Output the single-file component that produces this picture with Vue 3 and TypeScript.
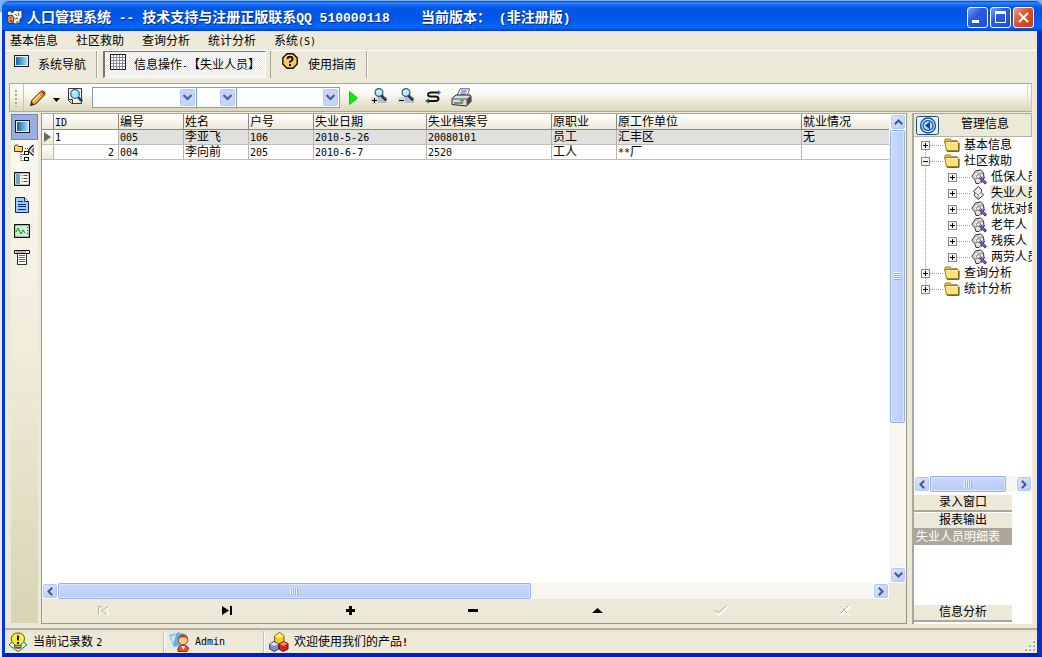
<script setup lang="ts">
import { ref } from 'vue'

interface TreeNode {
  label: string
  open: boolean
  children: string[]
}

const menus = ['基本信息', '社区救助', '查询分析', '统计分析']

const titleParts = [
  { text: '人口管理系统', latin: false },
  { text: ' -- ', latin: true },
  { text: '技术支持与注册正版联系', latin: false },
  { text: 'QQ 510000118    ', latin: true },
  { text: '当前版本：', latin: false },
  { text: ' (', latin: true },
  { text: '非注册版', latin: false },
  { text: ')', latin: true },
]

const columns = ['ID', '编号', '姓名', '户号', '失业日期', '失业档案号', '原职业', '原工作单位', '就业情况']
const rows = [
  ['1', '005', '李亚飞', '106', '2010-5-26', '20080101', '员工', '汇丰区', '无'],
  ['2', '004', '李向前', '205', '2010-6-7', '2520', '工人', '**厂', ''],
]

const isLatin = (text: string) => /^[\x20-\x7e]+$/.test(text)

const tree = ref<TreeNode[]>([
  { label: '基本信息', open: false, children: [] },
  {
    label: '社区救助',
    open: true,
    children: ['低保人员', '失业人员', '优抚对象', '老年人', '残疾人', '两劳人员'],
  },
  { label: '查询分析', open: false, children: [] },
  { label: '统计分析', open: false, children: [] },
])
const activeNode = ref('失业人员')

const views = ['screen', 'tree', 'form', 'doc', 'chart', 'scroll']
const activeView = ref('screen')

const steps = ['first', 'last', 'add', 'remove', 'edit', 'post', 'cancel']
const disabledSteps = ['first', 'post', 'cancel']
</script>

<template>
  <div class="desktop">
    <div class="window">
      <header class="titlebar">
        <svg class="app-icon" width="18" height="18" viewBox="0 0 18 18">
          <path d="M2 3h3l1 2 3-3 4 1 3-1v8l-2 1v4l-4 1-5-1-3-4 1-3-2-2z" fill="#f2f2ee" stroke="#3a3a44" />
          <path d="M2 8l4-1 2 3-1 5-4 1-2-4z" fill="#d9905a" stroke="#5a2c14" />
          <path d="M9 6l2 2M12 5l1 3M9 11l3-1M10 14h3" stroke="#55555f" />
          <path d="M4 10h1M4 13h2" stroke="#2a1208" />
        </svg>
        <h1><span v-for="(part, i) in titleParts" :key="i" :class="{ mono: part.latin }">{{ part.text }}</span></h1>
        <div class="caption-buttons">
          <button type="button" aria-label="最小化">
            <svg width="19" height="19" viewBox="0 0 19 19"><rect x="4" y="12" width="7" height="3" fill="#fff" /></svg>
          </button>
          <button type="button" aria-label="最大化">
            <svg width="19" height="19" viewBox="0 0 19 19"><path d="M4 3h11v12H4zM5 6v8h9V6z" fill="#fff" fill-rule="evenodd" /></svg>
          </button>
          <button type="button" class="close" aria-label="关闭">
            <svg width="19" height="19" viewBox="0 0 19 19"><path d="M5 5l9 9M14 5l-9 9" stroke="#fff" stroke-width="2.2" /></svg>
          </button>
        </div>
      </header>

      <nav class="menubar">
        <button v-for="menu in menus" :key="menu" type="button">{{ menu }}</button>
        <button type="button">系统<span class="latin">(S)</span></button>
      </nav>

      <div class="tabs">
        <button type="button" class="tab">
          <svg width="16" height="16" viewBox="0 0 16 16">
            <defs>
              <linearGradient id="screenFill"><stop offset="0" stop-color="#1462a8" /><stop offset="1" stop-color="#a8dcf4" /></linearGradient>
            </defs>
            <rect x=".5" y="1.5" width="14" height="11" fill="#e8f0f4" stroke="#111c2c" />
            <rect x="2" y="3" width="11" height="8" fill="url(#screenFill)" />
          </svg>
          <span>系统导航</span>
        </button>
        <button type="button" class="tab pressed">
          <svg width="16" height="16" viewBox="0 0 16 16">
            <rect x=".5" y=".5" width="15" height="15" fill="#fff" stroke="#222" />
            <path d="M3.5 1v14M6.5 1v14M9.5 1v14M12.5 1v14M1 3.5h14M1 6.5h14M1 9.5h14M1 12.5h14" stroke="#8c8c8c" />
          </svg>
          <span>信息操作<span class="latin">-</span>【失业人员】</span>
        </button>
        <button type="button" class="tab help">
          <svg width="16" height="18" viewBox="0 0 16 18">
            <path d="M5 .7h6l4.2 4.2v6L11 15.2H5L.8 11V5z" fill="#fbc75c" stroke="#111" stroke-width="1.4" />
            <path d="M2.5 6L5.5 2.5H10" fill="none" stroke="#fff0b8" />
            <path d="M5.5 6q0-2.2 2.5-2.2T10.5 6q0 1.3-1.5 2T8 9.8" fill="none" stroke="#111" stroke-width="1.9" />
            <rect x="7" y="11" width="2" height="2" fill="#111" />
          </svg>
          <span>使用指南</span>
        </button>
      </div>

      <div class="toolbar">
        <span class="grip"></span>
        <button type="button" class="pen" aria-label="编辑">
          <svg width="18" height="18" viewBox="0 0 18 18">
            <path d="M1.5 16.5l1.3-5L11.5 2.8q2-1.8 3.8.1 1.6 1.8 0 3.3L6.6 15z" fill="#f6a936" stroke="#2b1a08" />
            <path d="M4.2 12l8-8" stroke="#ffe08a" stroke-width="1.5" />
            <path d="M11.5 3l3.5 3.5.7-1.5-.8-2-1.6-.6z" fill="#e8381c" />
            <path d="M10.5 4l3.5 3.5" stroke="#8a7460" />
            <path d="M2 16.3l.7-3 2.2 2.2z" fill="#222" />
          </svg>
        </button>
        <button type="button" class="drop" aria-label="更多">
          <svg width="7" height="4" viewBox="0 0 7 4"><path d="M0 0h7L3.5 4z" fill="#000" /></svg>
        </button>
        <button type="button" class="find" aria-label="查找">
          <svg width="17" height="18" viewBox="0 0 17 18">
            <path d="M1.5 1.5h13v15h-10l-3-3z" fill="#f4f4ee" stroke="#33363a" />
            <path d="M1.5 12.5h4v4" fill="#c8c8c0" stroke="#33363a" />
            <circle cx="8" cy="7" r="4.3" fill="#a8e4f8" stroke="#2a6f98" stroke-width="1.3" />
            <path d="M5.8 6q.7-2 2.5-1.8" stroke="#fff" fill="none" />
            <path d="M11.3 10.3l3.8 4" stroke="#163a60" stroke-width="2.4" />
          </svg>
        </button>
        <div class="combos">
          <label v-for="name in ['字段', '条件', '数值']" :key="name" class="combo">
            <select :aria-label="name"><option></option></select>
            <svg width="15" height="17" viewBox="0 0 15 17">
              <rect x=".5" y=".5" width="14" height="16" rx="1.5" fill="#c5d5fc" stroke="#b4c6f2" />
              <path d="M3.5 6l4 4 4-4" fill="none" stroke="#46608f" stroke-width="2.2" />
            </svg>
          </label>
        </div>
        <button type="button" class="go" aria-label="执行">
          <svg width="9" height="14" viewBox="0 0 9 14"><path d="M.5 .5v13L8.5 7z" fill="#0bec0b" stroke="#0cc40c" /></svg>
        </button>
        <button v-for="sign in ['+', '-']" :key="sign" type="button" class="zoom" :aria-label="sign === '+' ? '放大' : '缩小'">
          <svg width="17" height="17" viewBox="0 0 17 17">
            <rect x="6" y="9" width="10" height="6" fill="#b9bcc0" />
            <rect x="0" y="9" width="7" height="7" fill="#dcdcd4" />
            <path v-if="sign === '+'" d="M1 12.5h5M3.5 10v5" stroke="#000" />
            <path v-else d="M1 12.5h5" stroke="#000" />
            <circle cx="8" cy="4.5" r="3.9" fill="#b4ecfa" stroke="#33567c" stroke-width="1.2" />
            <path d="M6 4q.6-1.8 2.2-1.6" stroke="#fff" fill="none" />
            <path d="M10.5 7.5l4.5 4.7" stroke="#0c1c34" stroke-width="2.6" />
            <path d="M10.8 7.3l3.7 3.7" stroke="#6f9cc8" stroke-width=".8" />
          </svg>
        </button>
        <button type="button" class="refresh" aria-label="刷新">
          <svg width="17" height="16" viewBox="0 0 17 16">
            <path d="M14 3.5H6.5Q3 3.500 3 5.800 3 7.500 6 7.500h4.500q3 .2 3 2.200 0 2.300-3.500 2.300H2" fill="none" stroke="#111" stroke-width="1.9" />
            <path d="M13 1v5l3-2.5z" fill="#4757b8" />
            <path d="M4 9.5v5L0 12z" fill="#1a6a22" />
          </svg>
        </button>
        <button type="button" class="print" aria-label="打印">
          <svg width="21" height="19" viewBox="0 0 21 19">
            <path d="M6 8L9 .8h9.5L16 9z" fill="#fff" stroke="#555b70" />
            <path d="M10 3h6M9.2 5h6M8.5 7h6" stroke="#4058c0" />
            <path d="M1 10.5L5 7h14l1 1.5v5L15.5 18 1 16.5z" fill="#dcdcd8" stroke="#222" />
            <path d="M15.5 11L20 7.5v6L15.5 18z" fill="#4c4c4c" />
            <path d="M1.5 11h14" stroke="#555" />
            <path d="M3 15h9" stroke="#666" stroke-width="1.5" />
            <rect x="9" y="12" width="4" height="1.5" fill="#20b83c" />
          </svg>
        </button>
        <span class="toolbar-end"></span>
      </div>

      <main class="workspace">
        <aside class="views">
          <button
            v-for="view in views"
            :key="view"
            type="button"
            :class="{ active: activeView === view }"
            :aria-label="view"
            @click="activeView = view"
          >
            <svg v-if="view === 'screen'" width="16" height="14" viewBox="0 0 16 14">
              <rect x=".5" y=".5" width="14" height="12" fill="#e8f0f4" stroke="#111c2c" />
              <rect x="2" y="2" width="11" height="9" fill="url(#screenFill)" />
            </svg>
            <svg v-else-if="view === 'tree'" width="21" height="18" viewBox="0 0 21 18">
              <path d="M.5 2.5l1-1.5h2l1 1.5h4v5h-8z" fill="#ffd75e" stroke="#4a3608" />
              <path d="M7 8v8.5h4M7 10.5h4M11 4.5h3" fill="none" stroke="#333" stroke-dasharray="1 1" />
              <rect x="10.5" y="7.5" width="4" height="3" fill="#fff" stroke="#111" />
              <rect x="10.5" y="13.5" width="4" height="3" fill="#fff" stroke="#111" />
              <path d="M19.5 1q-5 4.500-5 5.500 0 1 5 5" fill="none" stroke="#111" stroke-width="1.3" />
              <path d="M20 3l-3 3.5 3 3z" fill="#5878b0" />
            </svg>
            <svg v-else-if="view === 'form'" width="16" height="14" viewBox="0 0 16 14">
              <rect x=".5" y=".5" width="15" height="13" rx="1" fill="#f6f6f2" stroke="#111" stroke-width="1.3" />
              <rect x="2" y="2" width="4" height="10" fill="#6aa6c0" />
              <path d="M7.5 3.5h1M7.5 6.5h1M7.5 9.5h1" stroke="#c03030" />
              <path d="M9.5 3.5h4M9.5 6.5h4M9.5 9.5h4" stroke="#555" />
            </svg>
            <svg v-else-if="view === 'doc'" width="16" height="16" viewBox="0 0 16 16">
              <path d="M1.5.5h9l4 4v11h-13z" fill="#9ccdf8" stroke="#0c2c58" />
              <path d="M10.5.5v4h4" fill="#e8f4ff" stroke="#0c2c58" />
              <path d="M4 4.5h5M4 7.5h8M4 9.5h8M4 12.5h8" stroke="#0a2c6c" />
            </svg>
            <svg v-else-if="view === 'chart'" width="16" height="14" viewBox="0 0 16 14">
              <rect x=".5" y=".5" width="15" height="13" rx="1" fill="#e6e6e0" stroke="#111" stroke-width="1.3" />
              <rect x="2" y="2" width="9" height="10" fill="#c4f4cc" />
              <path d="M2 8l2-4 3 6 2-4 2 3" fill="none" stroke="#188c30" />
              <path d="M13.5 3v8" stroke="#444" stroke-dasharray="1 2" />
            </svg>
            <svg v-else width="16" height="15" viewBox="0 0 16 15">
              <path d="M3.5 4v10.5h9V4" fill="#fff" stroke="#333" />
              <path d="M.5.5h15v3H.5z" fill="#eee" stroke="#111" />
              <path d="M2 2h10" stroke="#777" />
              <path d="M5 5.5h6M5 7.5h6M5 9.5h6M5 11.5h6" stroke="#666" />
            </svg>
          </button>
        </aside>

        <section class="data">
          <div class="grid">
            <div class="grid-scroll">
              <table>
                <colgroup>
                  <col class="c12" /><col class="c65" /><col class="c65" /><col class="c65" /><col class="c65" />
                  <col class="c113" /><col class="c125" /><col class="c65" /><col class="c185" /><col />
                </colgroup>
                <thead>
                  <tr>
                    <th></th>
                    <th v-for="column in columns" :key="column"><span :class="{ latin: isLatin(column) }">{{ column }}</span></th>
                  </tr>
                </thead>
                <tbody>
                  <tr v-for="(row, r) in rows" :key="row[0]" :class="{ current: r === 0 }">
                    <td class="marker">
                      <svg v-if="r === 0" width="7" height="10" viewBox="0 0 7 10"><path d="M0 0v10l7-5z" fill="#6b6b66" /></svg>
                    </td>
                    <td v-for="(cell, c) in row" :key="c" :class="{ id: c === 0 }">
                      <template v-if="cell.startsWith('**')"><span class="latin">**</span>{{ cell.slice(2) }}</template>
                      <span v-else :class="{ latin: isLatin(cell) }">{{ cell }}</span>
                    </td>
                  </tr>
                </tbody>
              </table>
            </div>
            <div class="vscroll">
              <button type="button" class="sb" aria-label="向上">
                <svg width="9" height="6" viewBox="0 0 9 6"><path d="M.8 5.2l3.7-3.7 3.7 3.7" /></svg>
              </button>
              <div class="track"><div class="thumb"><i></i></div></div>
              <button type="button" class="sb" aria-label="向下">
                <svg width="9" height="6" viewBox="0 0 9 6"><path d="M.8 .8l3.7 3.7L8.2 .8" /></svg>
              </button>
            </div>
            <div class="hscroll">
              <button type="button" class="sb" aria-label="向左">
                <svg width="6" height="9" viewBox="0 0 6 9"><path d="M5.2 .8L1.5 4.5l3.7 3.7" /></svg>
              </button>
              <div class="track"><div class="thumb"><i></i></div></div>
              <button type="button" class="sb" aria-label="向右">
                <svg width="6" height="9" viewBox="0 0 6 9"><path d="M.8 .8l3.7 3.7L.8 8.2" /></svg>
              </button>
            </div>
          </div>
          <div class="navigator">
            <button v-for="step in steps" :key="step" type="button" :aria-label="step" :disabled="disabledSteps.includes(step)">
              <svg width="13" height="11" viewBox="0 0 13 11">
                <template v-if="step === 'first'">
                  <path d="M2.5 10.5V2M11 2.5L5.5 6l5.5 4.5v-8" fill="none" stroke="#fff" />
                  <path d="M1.5 9.5V1.5h3M11 1.5L4.5 5.5l5 4" fill="none" stroke="#b4b09c" />
                </template>
                <path v-else-if="step === 'last'" d="M1 1v9l7-4.5zM9 1h2v9H9z" />
                <path v-else-if="step === 'add'" d="M5 1h3v3h3v3H8v3H5V7H2V4h3z" />
                <path v-else-if="step === 'remove'" d="M1 4h10v3H1z" />
                <path v-else-if="step === 'edit'" d="M1 8h11L6.5 3z" />
                <template v-else-if="step === 'post'">
                  <path d="M2 6.5l3 3L13 1.5" fill="none" stroke="#fff" stroke-width="2" />
                  <path d="M1 7l1-1.5L4.5 8 12.5 .5" fill="none" stroke="#aaa692" />
                </template>
                <template v-else>
                  <path d="M2 1l10 10M12 1L2 11" stroke="#fff" stroke-width="2" />
                  <path d="M1.5 .5l9 9M10.5 .5l-9 9" stroke="#aaa692" stroke-dasharray="3 1" />
                </template>
              </svg>
            </button>
          </div>
        </section>

        <aside class="panel">
          <div class="panel-head">
            <button type="button" aria-label="收起">
              <svg width="23" height="19" viewBox="0 0 23 19">
                <rect x=".5" y=".5" width="22" height="18" rx="2" fill="#e6f4fc" stroke="#224a7c" />
                <circle cx="12" cy="9.5" r="7.4" fill="#fff" stroke="#1c50a0" stroke-width="1.5" />
                <circle cx="12" cy="9.5" r="5" fill="#b8e0f8" stroke="#1c60b8" stroke-width="1.5" />
                <path d="M14 5.5v8l-5-4z" fill="#0c48a0" />
              </svg>
            </button>
            <h2>管理信息</h2>
          </div>
          <ul class="tree">
            <li v-for="node in tree" :key="node.label">
              <div class="node">
                <button type="button" class="toggle" :aria-label="node.label" :aria-expanded="node.open" @click="node.open = !node.open">
                  <svg width="9" height="9" viewBox="0 0 9 9">
                    <rect x=".5" y=".5" width="8" height="8" fill="#f4f2ea" stroke="#7c8ca4" />
                    <path :d="node.open ? 'M2 4.5h5' : 'M2 4.5h5M4.5 2v5'" stroke="#000" />
                  </svg>
                </button>
                <i class="link"></i>
                <svg width="16" height="14" viewBox="0 0 16 14">
                  <path d="M.7 3l1-2h4.5l1.2 1.7H13v9H3z" fill="#f0c43c" stroke="#a07c18" />
                  <path d="M.8 3.500h12.700q1.200 0 1.200 1.200v6.800q0 1.200-1.200 1.200H2.500z" fill="#ffe27c" stroke="#a07c18" />
                  <path d="M2 4.500h11" stroke="#fff6c4" />
                  <path d="M3 13.300h12V5" fill="none" stroke="#5c4a14" />
                </svg>
                <button type="button" class="name">{{ node.label }}</button>
              </div>
              <ul v-if="node.open">
                <li v-for="child in node.children" :key="child" class="node child">
                  <button type="button" class="toggle" :aria-label="child">
                    <svg width="9" height="9" viewBox="0 0 9 9">
                      <rect x=".5" y=".5" width="8" height="8" fill="#f4f2ea" stroke="#7c8ca4" />
                      <path d="M2 4.5h5M4.5 2v5" stroke="#000" />
                    </svg>
                  </button>
                  <i class="link"></i>
                  <svg v-if="child === activeNode" width="16" height="16" viewBox="0 0 16 16">
                    <path d="M2.5 6L7.5 1.5l3 3v3l2 2.5-5.5 4.500-4-4.500 1-2z" fill="#efefef" stroke="#333" />
                    <path d="M4 7.5l3 2.5 3.5-3M7 10.5V14" fill="none" stroke="#888" />
                  </svg>
                  <svg v-else width="16" height="16" viewBox="0 0 16 16">
                    <path d="M.8 7.5L4.500 2l5-1.200 3 3.200.5 5-5 5.500H5L3.500 10z" fill="#dedede" stroke="#333" />
                    <path d="M5 1.5L8.5 5l4-1M3 10l5-1" fill="none" stroke="#999" />
                    <circle cx="7.5" cy="7.5" r="1.8" fill="#fff" stroke="#777" />
                    <path d="M9 8.5l6 6" stroke="#4a2880" stroke-width="3" />
                    <path d="M9 8.5l5 5" stroke="#c89ae8" />
                    <path d="M14 8l-4 6" stroke="#6c3ca8" />
                  </svg>
                  <button type="button" class="name" :class="{ selected: child === activeNode }" @click="activeNode = child">{{ child }}</button>
                </li>
              </ul>
            </li>
          </ul>
          <div class="hscroll small">
            <button type="button" class="sb" aria-label="向左">
              <svg width="6" height="9" viewBox="0 0 6 9"><path d="M5.2 .8L1.5 4.5l3.7 3.7" /></svg>
            </button>
            <div class="track"><div class="thumb"><i></i></div></div>
            <button type="button" class="sb" aria-label="向右">
              <svg width="6" height="9" viewBox="0 0 6 9"><path d="M.8 .8l3.7 3.7L.8 8.2" /></svg>
            </button>
          </div>
          <div class="groups">
            <button type="button" class="group">录入窗口</button>
            <button type="button" class="group">报表输出</button>
            <button type="button" class="report">失业人员明细表</button>
            <button type="button" class="group last">信息分析</button>
          </div>
        </aside>
      </main>

      <footer class="status">
        <div class="cell">
          <svg width="20" height="20" viewBox="0 0 20 20">
            <path d="M1 13l4-4h10l4 4-9 6.500z" fill="#e8f4e8" stroke="#2c6c6c" />
            <path d="M6.5 12.5Q3 10 3.200 6.500 4 1 10 1t6.600 5.500q0 3.500-3.400 6v3H6.500z" fill="#f8ee38" stroke="#5c5a10" />
            <path d="M7 13.5h6M7.5 16h5" stroke="#555" stroke-width="1.5" />
            <path d="M10 3.5v5M10 10v2" stroke="#111" stroke-width="2" />
          </svg>
          <span>当前记录数 <span class="latin">2</span></span>
        </div>
        <div class="cell">
          <svg width="21" height="20" viewBox="0 0 21 20">
            <path d="M.5 3L7 2l2-1.500 8 2v9L5 15z" fill="#58b4ec" stroke="#90c8ee" />
            <path d="M2 4l5-1-3 9z" fill="#c8ecfc" />
            <path d="M9 19.500q-1-6 4.500-6.500 6 .5 6 4l-1.500 2.500z" fill="#e05420" stroke="#982c08" />
            <path d="M12 14l2.500 4 1.500-4z" fill="#fff" />
            <circle cx="14" cy="8" r="4.8" fill="#f8c490" stroke="#a84c18" />
            <path d="M9.500 7.500Q10 2 14.500 2.500 19.500 3 18.800 8l-2-2.500-5-.2z" fill="#b04818" />
          </svg>
          <span class="latin">Admin</span>
        </div>
        <div class="cell">
          <svg width="20" height="20" viewBox="0 0 20 20">
            <path d="M5.500 4l5-3.500 4.500 3v6l-5 3-4.500-3z" fill="#f4c820" stroke="#7c5c08" />
            <path d="M6 4l4.500 2.500L15 4l-4.500-3z" fill="#fff070" />
            <path d="M.7 12l4-2.500 5 2.500v5l-4.500 2.500-4.500-2.500z" fill="#8088d8" stroke="#383c70" />
            <path d="M1 12l4 2 4.500-2L5 10z" fill="#dce0fc" />
            <path d="M10 12l4.500-2.500 4.500 2v5.500L14 19.500l-4-2.500z" fill="#d02818" stroke="#681008" />
            <path d="M10.500 12l4 2 4-2.500-4-1.500z" fill="#f88870" />
          </svg>
          <span>欢迎使用我们的产品<b class="latin">!</b></span>
        </div>
        <svg class="sizer" width="11" height="11" viewBox="0 0 11 11">
          <path d="M9 1h2v2H9zM5 5h2v2H5zM9 5h2v2H9zM1 9h2v2H1zM5 9h2v2H5zM9 9h2v2H9z" fill="#b8ae90" />
          <path d="M8 0h2v1H8zM4 4h2v1H4zM8 4h2v1H8zM0 8h2v1H0zM4 8h2v1H4zM8 8h2v1H8z" fill="#fff" />
        </svg>
      </footer>
    </div>
  </div>
</template>

<style>
body {
  margin: 0;
  background: #cfdcef;
}
</style>

<style scoped>
* {
  box-sizing: border-box;
}
.desktop {
  min-height: 100vh;
  padding: 1px 0 0 2px;
  display: flex;
  background: linear-gradient(#7fb0ee 0 12px, #e4ecf6 12px);
  font: 12px/16px 'Liberation Sans', 'Noto Sans CJK SC', sans-serif;
  color: #000;
}
button {
  margin: 0;
  padding: 0;
  border: 0;
  background: none;
  font: inherit;
  color: inherit;
  white-space: nowrap;
}
svg {
  display: block;
  flex: none;
}
h1,
h2,
ul {
  margin: 0;
  padding: 0;
  list-style: none;
  font: inherit;
}
.latin {
  font-family: 'DejaVu Sans Mono', monospace;
  font-size: 10px;
  line-height: 1;
}
.window {
  flex: 1;
  min-width: 0;
  display: flex;
  flex-direction: column;
  background: #ece9d8;
  border: solid #0a35d2;
  border-width: 0 5px 4px 3px;
  border-right-color: #0830c4;
  border-bottom-color: #0420b0;
  border-radius: 7px 7px 0 0;
}

/* title bar */
.titlebar {
  height: 30px;
  margin: 0 -5px 0 -3px;
  padding: 2px 8px 0 4px;
  display: flex;
  align-items: center;
  border-radius: 7px 7px 0 0;
  background: linear-gradient(#0a3fc0 0, #2e86ff 2px, #0a5eee 5px, #0054e3 9px, #0058ea 18px, #0066fc 25px, #0462f4 27px, #003cc4 30px);
  color: #fff;
}
.titlebar h1 {
  flex: 1;
  margin-left: 3px;
  font: bold 14px/20px 'Noto Sans CJK SC', sans-serif;
  white-space: pre;
  text-shadow: 1px 1px #0a2c88;
}
.titlebar .mono {
  font-family: 'Liberation Mono', monospace;
  font-size: 13px;
}
.caption-buttons {
  display: flex;
  gap: 2px;
}
.caption-buttons button {
  width: 21px;
  height: 21px;
  border: 1px solid #fff;
  border-radius: 3px;
  background: linear-gradient(135deg, #7aa2f4, #2c5ce0 40%, #1c4ed6);
}
.caption-buttons .close {
  background: linear-gradient(135deg, #f0a088, #e0502c 45%, #c83c14);
}

/* menu */
.menubar {
  height: 20px;
  padding-left: 5px;
  display: flex;
  gap: 18px;
  border-bottom: 1px solid #fff;
}

/* page tabs */
.tabs {
  height: 27px;
  display: flex;
}
.tab {
  display: flex;
  align-items: center;
  gap: 8px;
  padding: 0 10px 0 9px;
  border-right: 1px solid #aca899;
  box-shadow: 1px 0 #fff;
}
.tab svg {
  margin-bottom: 5px;
}
.tab.pressed {
  margin: 0 4px 0 6px;
  padding: 0 5px;
  border: 1px solid #fff;
  border-top-color: #77746a;
  border-left: 2px solid #77746a;
  box-shadow: none;
  background: repeating-conic-gradient(#fff 0 25%, #ece9d8 0 50%) 0 0 / 2px 2px;
}
.tab.help {
  padding-left: 11px;
  gap: 10px;
  border-left: 1px solid #aca899;
}

/* toolbar */
.toolbar {
  height: 29px;
  margin: 5px 5px 0 4px;
  padding-left: 1px;
  display: flex;
  align-items: center;
  border: 1px solid #aca899;
  border-right-color: #c8c4a8;
  background: linear-gradient(#fff, #f8f7f0 40%, #dcd7b8);
}
.grip {
  align-self: stretch;
  width: 13px;
  margin-right: 5px;
  border-right: 1px solid #c8c4b0;
  background: repeating-linear-gradient(transparent 0 2px, #b0ac98 2px 4px) 4px 4px / 2px 19px no-repeat;
}
.drop {
  margin: 4px 7px 0 6px;
}
.find {
  margin-bottom: 3px;
}
.combos {
  display: flex;
  margin-left: 8px;
}
.combo {
  position: relative;
  width: 105px;
  height: 21px;
  border: 1px solid #7f9db9;
  background: #fff;
}
.combo + .combo {
  width: 40px;
  border-left: 0;
}
.combo:last-child {
  width: 103px;
}
.combo select {
  appearance: none;
  width: 100%;
  height: 19px;
  border: 0;
  background: transparent;
  outline: 0;
}
.combo svg {
  position: absolute;
  top: 1px;
  right: 1px;
  pointer-events: none;
}
.go {
  margin: 0 13px 0 9px;
}
.zoom {
  margin-right: 10px;
  margin-bottom: 2px;
}
.refresh {
  margin-right: 9px;
  margin-bottom: 2px;
}
.toolbar-end {
  align-self: stretch;
  margin-left: auto;
  width: 4px;
  border-left: 1px solid #e0dcc8;
}

/* workspace */
.workspace {
  flex: 1;
  min-height: 0;
  display: flex;
  padding: 1px 5px 0 6px;
}
.views {
  width: 27px;
  margin: 1px 3px 1px 0;
  display: flex;
  flex-direction: column;
  background: linear-gradient(#fbfaf5, #f0eddc 45%, #d8d4b4);
}
.views button {
  height: 26px;
  display: flex;
  align-items: center;
  padding-left: 3px;
}
.views .active {
  background: #99afe0;
  border: 1px solid #6c84c4;
}
.data {
  flex: 1;
  min-width: 0;
  display: flex;
  flex-direction: column;
  border: 1px solid #9c9888;
  border-top-color: #aca899;
}
.grid {
  flex: 1;
  display: grid;
  grid-template: 1fr 16px / 1fr 17px;
}
.grid-scroll {
  min-width: 0;
  overflow: hidden;
  background: #fff;
}
table {
  width: 100%;
  table-layout: fixed;
  border-collapse: separate;
  border-spacing: 0;
}
.c12 {
  width: 12px;
}
.c65 {
  width: 65px;
}
.c113 {
  width: 113px;
}
.c125 {
  width: 125px;
}
.c185 {
  width: 185px;
}
th,
td {
  height: 15px;
  padding: 0 1px;
  line-height: 12px;
  font-weight: normal;
  text-align: left;
  white-space: nowrap;
  overflow: hidden;
  border-right: 1px solid #b8b6ae;
  border-bottom: 1px solid #c0beb4;
}
th:last-child,
td:last-child {
  border-right: 0;
}
th {
  height: 16px;
  background: linear-gradient(#fff, #ece9d8);
  border-right-color: #8c8a80;
  border-bottom-color: #8c8a80;
}
.current td {
  background: #e0e0de;
}
.current td.id {
  background: #fff;
}
tr:not(.current) .id {
  text-align: right;
  padding-right: 4px;
}
tbody .marker,
.current td.marker {
  padding: 0 2px;
  background: linear-gradient(#fff, #ece9d8);
}

/* scroll bars */
.vscroll,
.hscroll {
  display: flex;
  background: #f7f6f1;
}
.vscroll {
  flex-direction: column;
  padding: 0 1px;
}
.hscroll {
  height: 16px;
}
.track {
  flex: 1;
  min-width: 0;
  min-height: 0;
}
.sb {
  flex: none;
  width: 16px;
  height: 16px;
  display: grid;
  place-items: center;
  border: 1px solid #fff;
  border-radius: 3px;
  background: linear-gradient(135deg, #dce6fe, #b9cbf6);
  box-shadow: inset 0 0 0 1px #b4c8f6;
}
.sb path {
  fill: none;
  stroke: #40598c;
  stroke-width: 2;
}
.thumb {
  display: grid;
  place-items: center;
  border: 1px solid #98b0e8;
  border-radius: 2px;
  box-shadow: inset 0 0 0 1px #dce6fe;
}
.vscroll .thumb {
  height: 67%;
  background: linear-gradient(90deg, #c9d8fd, #b9cbf8);
}
.hscroll .thumb {
  width: 58%;
  height: 16px;
  background: linear-gradient(#c9d8fd, #b9cbf8);
}
.hscroll.small .thumb {
  width: 88%;
}
.thumb i {
  width: 8px;
  height: 7px;
  background: repeating-linear-gradient(90deg, #eef4fe 0 1px, #8caef0 1px 2px);
}
.vscroll .thumb i {
  width: 7px;
  height: 8px;
  background: repeating-linear-gradient(#eef4fe 0 1px, #8caef0 1px 2px);
}
.navigator {
  height: 24px;
  padding-bottom: 2px;
  display: grid;
  grid-template-columns: repeat(7, 1fr);
}
.navigator button {
  display: grid;
  place-items: center;
}

/* management panel */
.panel {
  width: 120px;
  margin-left: 5px;
  display: flex;
  flex-direction: column;
  border: solid #aca899;
  border-width: 1px 0 0 2px;
  background: #fff;
}
.panel-head {
  height: 23px;
  padding-left: 2px;
  display: flex;
  align-items: center;
  background: #ece9d8;
  border: 1px solid #b8b4a4;
  border-width: 0 1px 1px 0;
}
.panel-head h2 {
  flex: 1;
  margin-bottom: 2px;
  text-align: center;
}
.tree {
  flex: 1;
  position: relative;
  overflow: hidden;
}
.tree::before {
  content: '';
  position: absolute;
  left: 11px;
  top: 8px;
  height: 144px;
  border-left: 1px dotted #a0a0a0;
}
.node {
  position: relative;
  height: 16px;
  padding-left: 7px;
  display: flex;
  align-items: center;
}
.node.child {
  padding-left: 34px;
}
.link {
  flex: none;
  width: 14px;
  height: 1px;
  background: repeating-linear-gradient(90deg, #a0a0a0 0 1px, transparent 1px 2px);
}
.name {
  height: 16px;
  margin-left: 3px;
  padding: 0 1px;
}
.name.selected {
  background: #ece9d8;
}
.groups {
  height: 132px;
  padding-top: 3px;
  display: flex;
  flex-direction: column;
}
.group,
.report {
  width: 98px;
}
.group {
  height: 17px;
  line-height: 15px;
  background: #ece9d8;
  border-bottom: 2px solid #aca899;
}
.group:first-child {
  margin-bottom: 1px;
}
.report {
  height: 15px;
  line-height: 15px;
  padding-left: 2px;
  background: #aca899;
  color: #fff;
  text-align: left;
}
.last {
  margin-top: auto;
  margin-bottom: 2px;
}

/* status bar */
.status {
  height: 25px;
  margin-top: 4px;
  padding: 0 2px 0 3px;
  display: flex;
  align-items: center;
  border-top: 2px solid #b4b09c;
  background: linear-gradient(#e4e1d0, #ece9d8 4px);
}
.cell {
  height: 22px;
  display: flex;
  align-items: center;
  gap: 5px;
}
.cell:nth-child(1) {
  width: 155px;
}
.cell:nth-child(2),
.cell:nth-child(3) {
  padding-left: 5px;
  border-left: 1px solid #c4c0ac;
  box-shadow: inset 1px 0 #fff;
}
.cell:nth-child(2) {
  width: 100px;
}
.sizer {
  margin: 8px 0 0 auto;
}
</style>
